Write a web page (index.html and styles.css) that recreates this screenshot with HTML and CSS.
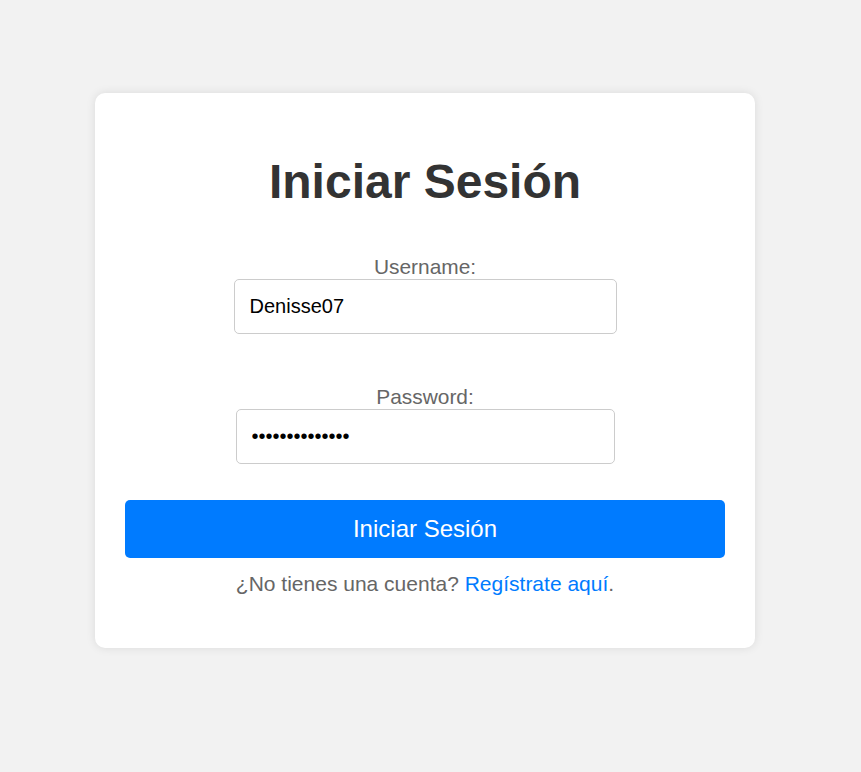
FILE: index.html
```html
<!DOCTYPE html>
<html lang="es">
<head>
<meta charset="utf-8">
<title>Iniciar Sesión</title>
<link rel="stylesheet" href="styles.css">
</head>
<body>
<div class="page">
  <div class="card">
    <h1 class="title">Iniciar Sesión</h1>
    <form class="form">
      <div class="group group-user">
        <label class="label" for="username">Username:</label>
        <input class="input input-user" type="text" id="username" value="Denisse07">
      </div>
      <div class="group group-pass">
        <label class="label" for="password">Password:</label>
        <input class="input input-pass" type="password" id="password" value="Denisse07Pass1">
      </div>
      <button class="btn" type="button">Iniciar Sesión</button>
    </form>
    <p class="footer">¿No tienes una cuenta? <a class="link" href="#">Regístrate aquí</a>.</p>
  </div>
</div>
</body>
</html>
```

FILE: styles.css
```css
html, body {
  margin: 0;
  padding: 0;
  background: #f2f2f2;
  font-family: "Liberation Sans", Arial, sans-serif;
}
.page {
  padding: 93px 0 0 95px;
  height: 772px;
  box-sizing: border-box;
}
.card {
  width: 660px;
  height: 555px;
  box-sizing: border-box;
  background: #fff;
  border-radius: 10px;
  box-shadow: 0 0 10px rgba(0, 0, 0, 0.1);
  padding: 30px 30px 0;
  text-align: center;
}
.title {
  margin: 31px 0 0;
  font-size: 48px;
  line-height: 55px;
  font-weight: bold;
  color: #333;
}
.form {
  display: flex;
  flex-direction: column;
  align-items: center;
}
.group {
  display: flex;
  flex-direction: column;
  align-items: center;
}
.group-user {
  margin-top: 46px;
}
.group-pass {
  margin-top: 51px;
}
.label {
  display: block;
  font-size: 20.9px;
  line-height: 24px;
  color: #666;
}
.input {
  box-sizing: border-box;
  height: 55px;
  padding: 0 15px;
  border: 1px solid #ccc;
  border-radius: 5px;
  font-family: "Liberation Sans", Arial, sans-serif;
  font-size: 20px;
  color: #000;
  background: #fff;
  outline: none;
}
.input-user {
  width: 383px;
}
.input-pass {
  width: 379px;
}
.btn {
  margin-top: 36px;
  width: 600px;
  height: 58px;
  border: none;
  border-radius: 5px;
  background: #007bff;
  color: #fff;
  font-family: "Liberation Sans", Arial, sans-serif;
  font-size: 24px;
  cursor: pointer;
}
.footer {
  margin: 14px 0 0;
  font-size: 21px;
  line-height: 24px;
  color: #666;
}
.link {
  color: #007bff;
  text-decoration: none;
}
```
